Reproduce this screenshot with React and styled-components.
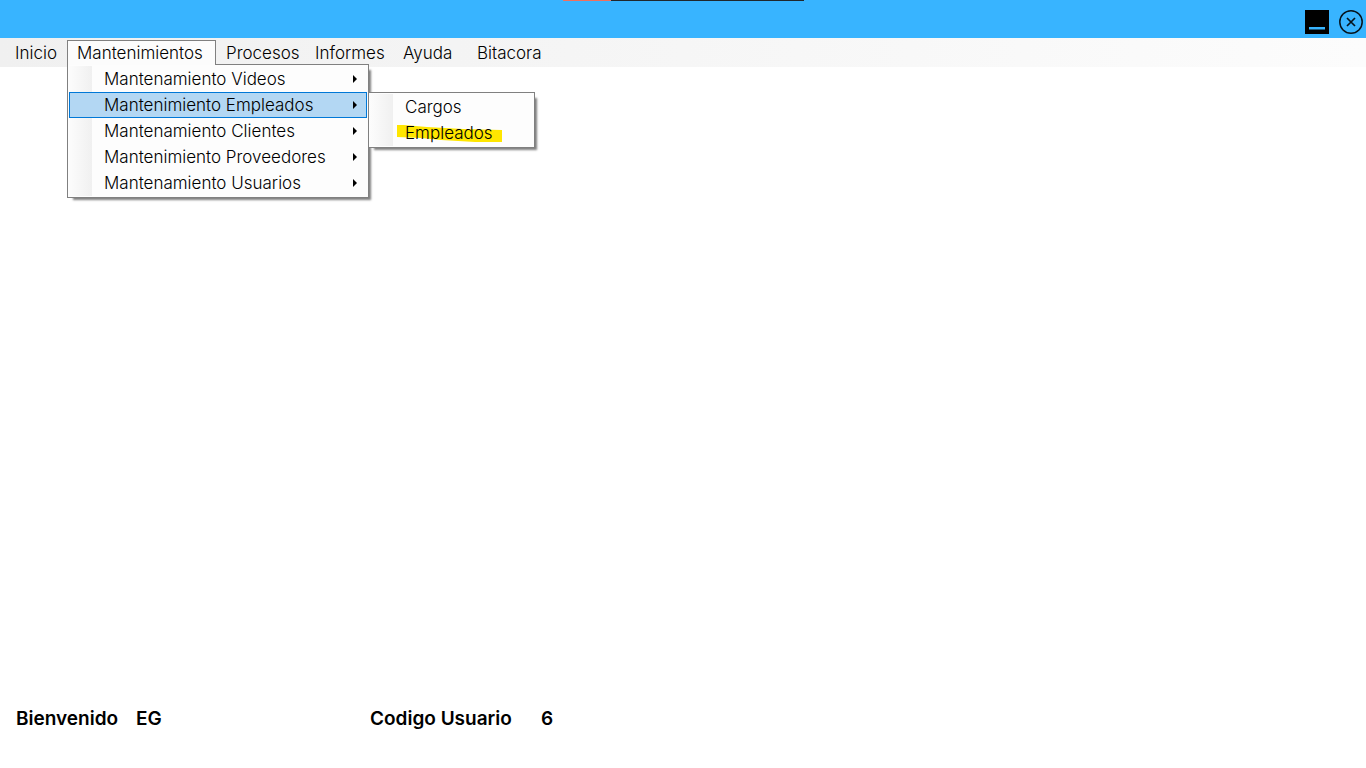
import React from "react";
import styled, { createGlobalStyle } from "styled-components";

const GlobalStyle = createGlobalStyle`
  * { box-sizing: border-box; }
  body {
    margin: 0;
    background: #fff;
    color: #000;
    font-family: "Century Gothic", Inter, "Liberation Sans", sans-serif;
  }
  button { font: inherit; color: inherit; cursor: default; }
`;

const Window = styled.div`
  display: flex;
  flex-direction: column;
  min-height: 100vh;
`;

const TitleBar = styled.header`
  background: #38b4ff;
`;

const ShareStrip = styled.div`
  display: flex;
  width: 241px;
  height: 1px;
  margin: 0 auto;
  background: #20272c;

  &::before {
    content: "";
    width: 48px;
    background: #f0705f;
  }
`;

const WindowControls = styled.div`
  display: flex;
  justify-content: flex-end;
  gap: 10px;
  padding: 9px 3px 4px;
`;

const ControlButton = styled.button`
  display: block;
  width: 24px;
  height: 24px;
  padding: 0;
  border: 0;
  background: transparent;

  svg { display: block; }
`;

const MenuBar = styled.nav`
  display: flex;
  height: 29px;
  padding: 2px 0 0 5px;
  font-size: 17px;
  font-weight: 300;
  background: linear-gradient(to right, #f0f0f0, #fcfcfc);
`;

const MenuSlot = styled.div`
  position: relative;
  width: ${(p) => p.$width}px;
`;

const MenuButton = styled.button`
  position: relative;
  z-index: ${(p) => (p.$open ? 2 : 0)};
  display: block;
  width: 100%;
  height: 25px;
  padding: 0 0 0 9px;
  border: 1px solid ${(p) => (p.$open ? "#808080" : "transparent")};
  border-bottom: 0;
  background: ${(p) => (p.$open ? "#fcfcfc" : "transparent")};
  line-height: 24px;
  text-align: left;
  white-space: nowrap;
`;

const Popup = styled.div`
  position: absolute;
  z-index: 1;
  top: ${(p) => (p.$nested ? "0" : "24px")};
  left: ${(p) => (p.$nested ? "299px" : "0")};
  width: ${(p) => (p.$nested ? 167 : 302)}px;
  padding: 1px;
  border: 1px solid #808080;
  background: linear-gradient(to right, #fcfcfc, #f0f0f0) 1px 1px / 23px calc(100% - 2px) no-repeat #fdfdfd;
  box-shadow: 4px 4px 2px -2px rgba(0, 0, 0, 0.5);
`;

const PopupRow = styled.div`
  position: relative;
`;

const PopupButton = styled.button`
  position: relative;
  display: flex;
  align-items: center;
  justify-content: space-between;
  width: 100%;
  height: 26px;
  padding: 0 9px 0 34px;
  border: 1px solid ${(p) => (p.$active ? "#0078d7" : "transparent")};
  background: ${(p) => (p.$active ? "#b3d7f3" : "transparent")};
  line-height: 24px;
  white-space: nowrap;
`;

const Marker = styled.svg`
  position: absolute;
  left: 26px;
  top: 4px;
`;

const Label = styled.span`
  position: relative;
`;

const Workspace = styled.main`
  flex: 1;
`;

const StatusBar = styled.dl`
  display: grid;
  grid-template-columns: 120px 234px 171px auto;
  margin: 0;
  padding: 0 16px 37px;
  font-size: 19px;
  font-weight: 600;
  line-height: 24px;

  dd { margin: 0; }
`;

const menus = [
  { label: "Inicio", width: 62 },
  {
    label: "Mantenimientos",
    width: 149,
    open: true,
    items: [
      { label: "Mantenamiento Videos" },
      {
        label: "Mantenimiento Empleados",
        active: true,
        items: [{ label: "Cargos" }, { label: "Empleados", marked: true }],
      },
      { label: "Mantenamiento Clientes" },
      { label: "Mantenimiento Proveedores" },
      { label: "Mantenamiento Usuarios" },
    ],
  },
  { label: "Procesos", width: 89 },
  { label: "Informes", width: 88 },
  { label: "Ayuda", width: 74 },
  { label: "Bitacora", width: 88 },
];

function PopupMenu({ items, nested }) {
  return (
    <Popup $nested={nested} role="menu">
      {items.map((item) => (
        <PopupRow key={item.label}>
          <PopupButton $active={item.active} role="menuitem" type="button">
            {item.marked && (
              <Marker width="106" height="18" viewBox="0 0 106 18" aria-hidden="true">
                <path d="M0 0H7L30 2L66 4L105 5V17L78 17L44 15L24 13L0 12Z" fill="#ffe600" />
              </Marker>
            )}
            <Label>{item.label}</Label>
            {!nested && (
              <svg width="5" height="8" viewBox="0 0 5 8" aria-hidden="true">
                <path d="M1 0L5 4L1 8Z" fill="#000" />
              </svg>
            )}
          </PopupButton>
          {item.items && <PopupMenu items={item.items} nested />}
        </PopupRow>
      ))}
    </Popup>
  );
}

export default function App() {
  return (
    <Window>
      <GlobalStyle />
      <TitleBar>
        <ShareStrip />
        <WindowControls>
          <ControlButton type="button" aria-label="Minimizar">
            <svg width="24" height="24" viewBox="0 0 24 24">
              <path d="M0 0H24V24H0Z" fill="#000" />
              <path d="M4 17H20V19.5H4Z" fill="#38b4ff" />
            </svg>
          </ControlButton>
          <ControlButton type="button" aria-label="Cerrar">
            <svg width="24" height="24" viewBox="0 0 24 24" fill="none" stroke="#06141d">
              <circle cx="12" cy="12" r="11.2" strokeWidth="1.5" />
              <path d="M8 8L16 16M16 8L8 16" strokeWidth="1.7" />
            </svg>
          </ControlButton>
        </WindowControls>
      </TitleBar>
      <MenuBar>
        {menus.map((menu) => (
          <MenuSlot key={menu.label} $width={menu.width}>
            <MenuButton $open={menu.open} type="button">
              {menu.label}
            </MenuButton>
            {menu.open && <PopupMenu items={menu.items} />}
          </MenuSlot>
        ))}
      </MenuBar>
      <Workspace />
      <StatusBar>
        <dt>Bienvenido</dt>
        <dd>EG</dd>
        <dt>Codigo Usuario</dt>
        <dd>6</dd>
      </StatusBar>
    </Window>
  );
}
